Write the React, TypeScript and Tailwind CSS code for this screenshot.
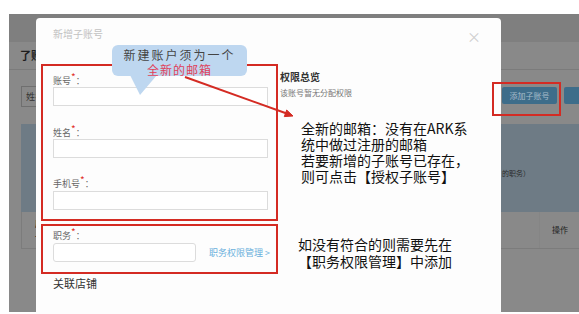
import React from "react";

const RED = "#d42b23";

function Label({ text }: { text: string }) {
  return (
    <div className="h-[12px] text-[9px] leading-[12px] text-[#666]">
      {text}
      <span className="relative top-[-3px] text-[10px] text-[#e0302a]">*</span>
      <span>：</span>
    </div>
  );
}

function Input({ w, rounded = false }: { w: string; rounded?: boolean }) {
  return (
    <div
      className={`h-[19px] ${w} border border-[#dcdcdc] bg-white ${rounded ? "rounded-[3px]" : ""}`}
    />
  );
}

export default function App() {
  return (
    <div
      className="relative w-[579px] h-[314px] overflow-hidden bg-white"
      style={{ fontFamily: '"Noto Sans CJK SC", "Noto Sans", sans-serif' }}
    >
      {/* dimmed background page */}
      <div className="pt-[14px] pl-[9px]">
        <div className="h-[298px] bg-[#898989] flex flex-col">
          <div className="h-[28px] bg-[#7f7f7f]" />
          <div className="h-[28px] border-b border-[#7b7b7b] flex items-center pl-[11px] text-[11px] font-bold text-[#1e1e1e]">
            了账号
          </div>
          <div className="pl-[12px] pt-[16px] flex flex-col">
            <div className="flex items-start h-[21px]">
              <div className="w-[460px] h-[21px] border border-[#6f6f6f] flex items-center pl-[4px] text-[9px] text-[#333]">
                姓名
              </div>
              <div className="ml-[21px] mt-[1px] w-[55px] h-[17px] rounded-[2px] bg-[#3e6d8a] flex items-center justify-center text-[8px] text-[#a7bccb]">
                添加子账号
              </div>
              <div className="ml-[7px] mt-[1px] flex-1 h-[17px] rounded-l-[2px] bg-[#3e6d8a]" />
            </div>
            <div className="mt-[17px] h-[88px] bg-[#6e7b85] flex items-center pl-[481px] pt-[10px] text-[7px] text-[#2a2a2a]">
              的职务）
            </div>
            <div className="h-[37px] border-b border-[#7c7c7c] flex items-center">
              <div className="w-[24px] h-full border-l border-[#7c7c7c] flex items-center pl-[13px] text-[9px] font-bold text-[#222]">
                序号
              </div>
              <div className="flex-1" />
              <div className="w-[40px] h-full border-l border-[#858585] flex items-center pl-[12px] text-[8px] text-[#222]">
                操作
              </div>
            </div>
          </div>
        </div>
      </div>

      {/* modal */}
      <div className="absolute left-[36px] top-[18px] w-[465px] h-[296px] rounded-t-[4px] bg-[#fdfdfd] flex flex-col">
        <div className="h-[46px] relative flex items-start">
          <div className="ml-[17px] mt-[9px] text-[10px] leading-[14px] text-[#c2c2c2]">新增子账号</div>
          <div className="ml-auto mr-[20px] mt-[10px] text-[14px] leading-[16px] text-[#cfcfcf]">×</div>
        </div>
        <div className="flex">
          <div className="ml-[5px] w-[237px] flex flex-col">
            <div className="border-2 border-[#d42b23] h-[157px] pt-[8px] pl-[10px] flex flex-col">
              <Label text="账号" />
              <div className="mt-[1px]">
                <Input w="w-[215px]" />
              </div>
              <div className="mt-[20px]">
                <Label text="姓名" />
              </div>
              <div className="mt-[1px]">
                <Input w="w-[215px]" />
              </div>
              <div className="mt-[19px]">
                <Label text="手机号" />
              </div>
              <div className="mt-[2px]">
                <Input w="w-[215px]" />
              </div>
            </div>
            <div className="mt-[3px] border-2 border-[#d42b23] h-[50px] pt-[3px] pl-[10px] flex flex-col">
              <Label text="职务" />
              <div className="mt-[2px] flex items-center">
                <Input w="w-[143px]" rounded />
                <div className="ml-[13px] text-[9px] text-[#6ab0dc]">职务权限管理 &gt;</div>
              </div>
            </div>
            <div className="mt-[2px] pl-[12px] text-[11px] leading-[14px] text-[#333]">关联店铺</div>
          </div>
          <div className="ml-[2px] pt-[6px] flex flex-col">
            <div className="text-[10px] leading-[14px] font-bold text-[#333]">权限总览</div>
            <div className="mt-[4px] text-[8px] leading-[10px] text-[#777]">该账号暂无分配权限</div>
          </div>
        </div>
      </div>

      {/* red highlight around button */}
      <div className="absolute left-[492px] top-[82px] w-[69px] h-[34px] border-2 border-[#d42b23]" />

      {/* arrow + bubble tail */}
      <svg className="absolute left-0 top-0 pointer-events-none" width={579} height={314}>
        <polygon points="130,75 157,75 140,95" fill="#bed7f0" />
        <line x1={185} y1={77} x2={286} y2={113.3} stroke={RED} strokeWidth={2} />
        <polygon points="293,116 284.3,116.6 286.7,110" fill={RED} stroke={RED} strokeWidth={1} />
      </svg>

      {/* bubble */}
      <div className="absolute left-[112px] top-[45px] w-[135px] h-[31px] rounded-[6px] bg-[#bed7f0] flex flex-col items-center pt-[1px]">
        <div className="text-[12px] leading-[17px] tracking-[2px] text-[#444]">新建账户须为一个</div>
        <div className="text-[12px] leading-[14px] tracking-[1px] text-[#e0405a]">全新的邮箱</div>
      </div>

      {/* annotation texts */}
      <div className="absolute left-[301px] top-[120px] flex flex-col text-[14px] leading-[16px] text-[#111]">
        <div className="h-[16px]">全新的邮箱：没有在ARK系</div>
        <div className="h-[16px]">统中做过注册的邮箱</div>
        <div className="h-[16px]">若要新增的子账号已存在，</div>
        <div className="h-[16px]">则可点击【授权子账号】</div>
      </div>
      <div className="absolute left-[298px] top-[236px] flex flex-col text-[14px] leading-[17px] text-[#111]">
        <div className="h-[17px]">如没有符合的则需要先在</div>
        <div className="h-[17px]">【职务权限管理】中添加</div>
      </div>
    </div>
  );
}
